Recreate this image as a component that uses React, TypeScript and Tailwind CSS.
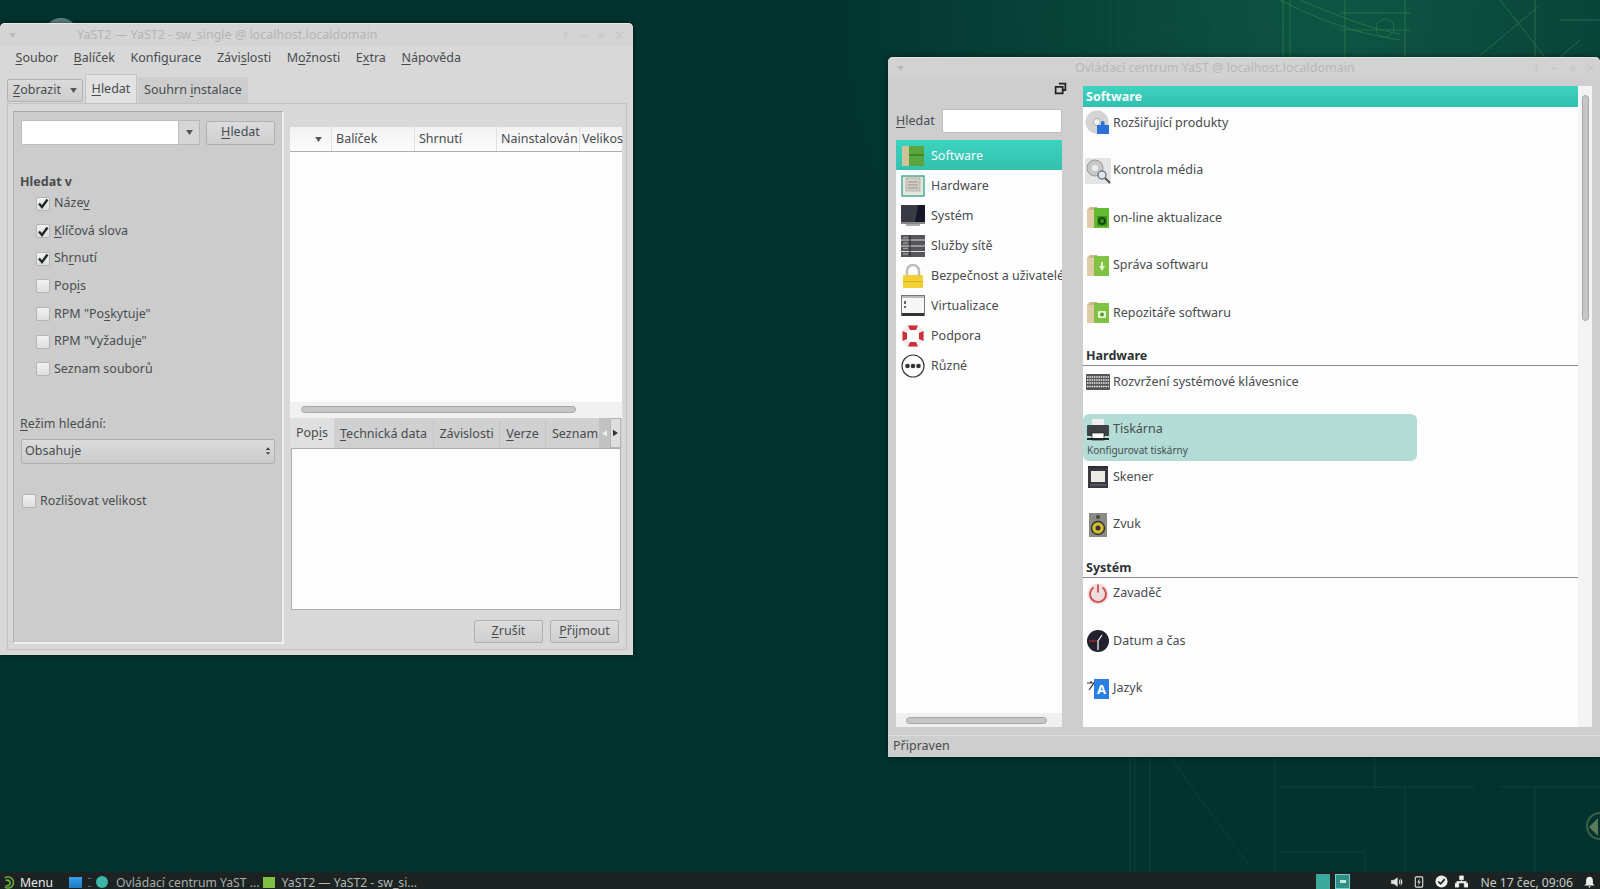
import React from "react";

const U = ({ c }: { c: string }) => <span className="underline underline-offset-2">{c}</span>;

const CheckBox = ({ on }: { on?: boolean }) => (
  <span className="flex h-[14px] w-[14px] shrink-0 items-center justify-center rounded-[2px] border border-[#b4b4b4] bg-gradient-to-b from-[#f2f2f2] to-[#dedede]">
    {on && (
      <svg viewBox="0 0 12 12" className="h-[13px] w-[13px]">
        <path d="M2 6 L5 9.500 L10.500 2" fill="none" stroke="#23282b" strokeWidth="2.400" />
      </svg>
    )}
  </span>
);

const Check = ({ on, label }: { on?: boolean; label: React.ReactNode }) => (
  <div className="flex h-[27.55px] items-center gap-[4px]">
    <CheckBox on={on} />
    <span>{label}</span>
  </div>
);

const Arrow = ({ cls }: { cls?: string }) => (
  <svg viewBox="0 0 8 6" className={"h-[5px] w-[7px] " + (cls ?? "")}>
    <path d="M0 0H8L4 6Z" fill="#555" />
  </svg>
);

const WinButtons = () => (
  <div className="flex items-center gap-[9px]">
    <svg viewBox="0 0 10 10" className="h-[9px] w-[9px]"><path d="M5 1v8M3 3l2-2 2 2" stroke="#c6c6c6" strokeWidth="1.400" fill="none" /></svg>
    <svg viewBox="0 0 10 10" className="h-[9px] w-[9px]"><path d="M1 5h8" stroke="#c6c6c6" strokeWidth="1.400" /></svg>
    <svg viewBox="0 0 10 10" className="h-[9px] w-[9px]"><path d="M1 5h8M5 1v8" stroke="#c6c6c6" strokeWidth="1.400" /></svg>
    <svg viewBox="0 0 10 10" className="h-[9px] w-[9px]"><path d="M1 1l8 8M9 1l-8 8" stroke="#c6c6c6" strokeWidth="1.400" /></svg>
  </div>
);

const Btn = ({ children, cls }: { children: React.ReactNode; cls: string }) => (
  <div className={"flex items-center justify-center rounded-[2px] border border-[#b0b0b0] bg-gradient-to-b from-[#dcdcdc] to-[#cfcfcf] " + cls}>{children}</div>
);

const Crate = ({ children, body }: { children: React.ReactNode; body: string }) => (
  <svg viewBox="0 0 24 24" className="h-[24px] w-[24px]">
    <rect x="1" y="4" width="8" height="18" fill="#e0cda8" />
    <path d="M1 4 L4 1 H12 L9 4Z" fill="#cdb78f" />
    <rect x="8" y="2" width="15" height="20" fill={body} />
    {children}
  </svg>
);

const Ic = {
  ext: (
    <svg viewBox="0 0 26 26" className="h-[26px] w-[26px]">
      <circle cx="12" cy="12" r="11.500" fill="#d4d4d4" />
      <circle cx="12" cy="12" r="3.500" fill="#f4f4f4" stroke="#aaa" />
      <path d="M12 15h4v-3a2 2 0 0 1 3.500 0v3h4.500v9H12z" fill="#2a72d8" />
    </svg>
  ),
  media: (
    <svg viewBox="0 0 26 26" className="h-[26px] w-[26px]">
      <rect width="26" height="26" fill="#e4e4e4" />
      <circle cx="10" cy="10" r="8" fill="#c8c8c8" stroke="#9a9a9a" />
      <circle cx="10" cy="10" r="3" fill="#eee" />
      <circle cx="17" cy="17" r="4" fill="#dfe6ee" stroke="#6f7a88" strokeWidth="1.400" />
      <path d="M20 20l5 5" stroke="#555" strokeWidth="2" />
    </svg>
  ),
  update: (
    <Crate body="#62bb33">
      <rect x="11" y="10" width="10" height="10" fill="#3b8f20" />
      <circle cx="16" cy="15" r="3" fill="none" stroke="#123d0a" strokeWidth="1.600" />
    </Crate>
  ),
  sw: (
    <Crate body="#80c243">
      <path d="M13 12h6l-3 5z M15 8h2v5h-2z" fill="#e6f5d4" />
    </Crate>
  ),
  repo: (
    <Crate body="#80c243">
      <rect x="12" y="10" width="8" height="7" rx="1" fill="#e6f5d4" />
      <circle cx="16" cy="13.500" r="2" fill="#5e9c2c" />
    </Crate>
  ),
  kbd: (
    <svg viewBox="0 0 24 16" className="h-[16px] w-[24px]">
      <rect width="24" height="16" rx="1" fill="#555" />
      <path d="M1 3h22M1 6h22M1 9h22M1 12.500h22" stroke="#eee" strokeWidth="1.500" strokeDasharray="1.500 .8" />
    </svg>
  ),
  printer: (
    <svg viewBox="0 0 22 22" className="h-[22px] w-[22px]">
      <rect x="5" y="0" width="12" height="8" fill="#efefef" />
      <rect x="0" y="6" width="22" height="11" rx="1" fill="#3d4246" />
      <rect x="5" y="14" width="12" height="7" fill="#fff" stroke="#222" strokeWidth=".7" />
      <rect x="0" y="19" width="22" height="2" fill="#222" />
    </svg>
  ),
  scanner: (
    <svg viewBox="0 0 20 22" className="h-[22px] w-[20px]">
      <rect width="20" height="3" fill="#2f2d33" />
      <rect x="0" y="2" width="20" height="20" fill="#3a3840" />
      <rect x="3" y="5" width="14" height="11" fill="#eeeae6" />
      <rect x="2" y="18" width="16" height="2" fill="#55535c" />
    </svg>
  ),
  sound: (
    <svg viewBox="0 0 18 24" className="h-[24px] w-[18px]">
      <rect width="18" height="24" fill="#8b8b85" />
      <circle cx="9" cy="4" r="2" fill="#444" />
      <circle cx="9" cy="15" r="6.500" fill="#d4c02f" stroke="#2f2f2f" strokeWidth="1.400" />
      <circle cx="9" cy="15" r="2.500" fill="#333" />
    </svg>
  ),
  boot: (
    <svg viewBox="0 0 22 22" className="h-[22px] w-[22px]">
      <circle cx="11" cy="11" r="10.500" fill="#f0dcdc" />
      <path d="M6.500 4.500a8 8 0 1 0 9 0" fill="none" stroke="#cf4b4b" strokeWidth="1.800" />
      <path d="M11 1.500v8" stroke="#cf4b4b" strokeWidth="1.800" />
    </svg>
  ),
  clock: (
    <svg viewBox="0 0 22 22" className="h-[22px] w-[22px]">
      <circle cx="11" cy="11" r="11" fill="#22222e" />
      <path d="M2 11h9" stroke="#c33" strokeWidth="1" />
      <path d="M11 11v9M11 11l4-6" stroke="#eee" strokeWidth="1.300" />
    </svg>
  ),
  lang: (
    <svg viewBox="0 0 24 22" className="h-[22px] w-[24px]">
      <path d="M1 5h7l-5 7M5 3v2" fill="none" stroke="#333" strokeWidth="1.200" />
      <rect x="8" y="1" width="15" height="20" fill="#2a7fe0" />
      <text x="15.500" y="16" fontSize="13" fontWeight="700" fontFamily="Noto Sans" fill="#fff" textAnchor="middle">A</text>
    </svg>
  ),
  catSoftware: (
    <svg viewBox="0 0 24 22" className="h-[22px] w-[24px]">
      <rect x="1" y="1" width="8" height="20" fill="#cfc39c" />
      <rect x="8" y="1" width="15" height="20" fill="#5aa53c" />
      <rect x="8" y="9" width="15" height="2" fill="#3d8a2a" />
    </svg>
  ),
  catHardware: (
    <svg viewBox="0 0 24 22" className="h-[22px] w-[24px]">
      <rect x="1" y="1" width="22" height="20" fill="#e6e6e0" stroke="#3fa98a" strokeWidth="1.400" />
      <rect x="5" y="3" width="14" height="13" fill="#d3cec6" stroke="#888" strokeWidth=".5" />
      <path d="M7 7h10M7 10h10M7 13h10" stroke="#9b9488" strokeWidth="1" />
    </svg>
  ),
  catSystem: (
    <svg viewBox="0 0 24 22" className="h-[22px] w-[24px]">
      <rect x="0" y="0" width="24" height="17" fill="#3a3a44" />
      <path d="M17 0h7v17h-10z" fill="#16162a" />
      <rect x="0" y="17" width="24" height="2" fill="#888" />
      <rect x="5" y="19" width="14" height="2" fill="#aaa" />
    </svg>
  ),
  catNet: (
    <svg viewBox="0 0 24 22" className="h-[22px] w-[24px]">
      <rect width="24" height="22" fill="#55555a" />
      <path d="M0 5h24M0 11h24M0 16.500h24" stroke="#ddd" strokeWidth="1" />
      <path d="M9 0v22" stroke="#2f2f33" strokeWidth="1" />
      <path d="M2 2.500h5M2 8h5M2 13.500h5M2 19h5" stroke="#999" strokeWidth="1.500" />
    </svg>
  ),
  catLock: (
    <svg viewBox="0 0 22 24" className="h-[24px] w-[22px]">
      <path d="M5 12V7a6 6 0 0 1 12 0v5" fill="none" stroke="#bdbdbd" strokeWidth="2.500" />
      <rect x="1" y="11" width="20" height="13" rx="1" fill="#f2cf32" />
      <rect x="1" y="17" width="20" height="1" fill="#d8b21f" />
    </svg>
  ),
  catVirt: (
    <svg viewBox="0 0 24 22" className="h-[22px] w-[24px]">
      <rect x=".5" y=".5" width="23" height="20" fill="#f7f7f7" stroke="#777" />
      <rect x="1" y="18" width="22" height="3" fill="#333" />
      <rect x="1" y="1" width="22" height="2" fill="#bbb" />
      <path d="M4 6v3M4 11v2" stroke="#333" strokeWidth="1.500" />
    </svg>
  ),
  catHelp: (
    <svg viewBox="0 0 24 24" className="h-[24px] w-[24px]">
      <circle cx="12" cy="12" r="9" fill="none" stroke="#f1eded" strokeWidth="5" />
      <path d="M7 1.500h10l-2 4.500H9z M7 22.500h10l-2-4.500H9z M1.500 7v10l4.500-2V9z M22.500 7v10l-4.500-2V9z" fill="#cf2d3a" />
    </svg>
  ),
  catMisc: (
    <svg viewBox="0 0 24 24" className="h-[24px] w-[24px]">
      <circle cx="12" cy="12" r="11" fill="#fff" stroke="#3c3c3c" strokeWidth="1.200" />
      <circle cx="6.500" cy="12" r="2.300" fill="#333" />
      <circle cx="12" cy="12" r="2.300" fill="#333" />
      <circle cx="17.500" cy="12" r="2.300" fill="#333" />
    </svg>
  ),
};

const SearchWindow = () => (
  <div className="absolute left-0 top-[23px] flex h-[632px] w-[633px] flex-col rounded-t-[5px] bg-[#d8d8d8] shadow-[0_0_6px_rgba(0,0,0,0.5)]">
    <div className="relative flex h-[23px] shrink-0 items-center justify-between rounded-t-[5px] border-t border-[#e8e8e8] bg-[#d4d4d4] pl-[9px] pr-[9px]">
      <Arrow cls="opacity-20" />
      <span className="absolute left-[77px] text-[#b4b4b4]">YaST2 — YaST2 - sw_single @ localhost.localdomain</span>
      <WinButtons />
    </div>
    <div className="flex h-[24px] shrink-0 items-center gap-[15.5px] pl-[15.5px]">
      <span><U c="S" />oubor</span>
      <span><U c="B" />alíček</span>
      <span>Konfi<U c="g" />urace</span>
      <span>Závi<U c="s" />losti</span>
      <span>M<U c="o" />žnosti</span>
      <span>E<U c="x" />tra</span>
      <span><U c="N" />ápověda</span>
    </div>
    <div className="mt-[4px] flex h-[29px] shrink-0 items-end pl-[7px]">
      <div className="mb-[1px] flex h-[23px] w-[76px] items-center justify-between rounded-[2px] border border-[#b2b2b2] bg-gradient-to-b from-[#dadada] to-[#cecece] pl-[5px] pr-[5px]">
        <span><U c="Z" />obrazit</span>
        <Arrow />
      </div>
      <div className="ml-[2px] flex h-[29px] w-[52px] items-center justify-center rounded-t-[2px] border border-b-0 border-[#c4c4c4] bg-[#e2e2e2]"><span><U c="H" />ledat</span></div>
      <div className="ml-[1px] flex h-[26px] w-[110px] items-center justify-center rounded-t-[2px] bg-[#cdcdcd]"><span>Souhrn <U c="i" />nstalace</span></div>
    </div>
    <div className="ml-[7px] mr-[6px] flex min-h-0 flex-1 gap-[6px] border border-[#c2c2c2] bg-[#d8d8d8] pb-[5px] pl-[5px] pr-[4px] pt-[7px]">
      <div className="flex w-[271px] shrink-0 flex-col border-b-2 border-l border-r-2 border-t border-b-[#efefef] border-l-[#aeaeae] border-r-[#efefef] border-t-[#a8a8a8] bg-[#cccccc] pl-[6px] pr-[6px] pt-[8px]">
        <div className="flex h-[25px] items-center pl-[1px]">
          <div className="h-[25px] w-[158px] rounded-l-[2px] border border-[#bdbdbd] bg-white" />
          <div className="flex h-[25px] w-[21px] items-center justify-center border border-l-0 border-[#b8b8b8] bg-[#d6d6d6]"><Arrow /></div>
          <Btn cls="ml-[6px] h-[24px] w-[69px]"><span><U c="H" />ledat</span></Btn>
        </div>
        <div className="mt-[28px] font-bold leading-[18px]">Hledat v</div>
        <div className="-mt-[1px] ml-[16px] flex flex-col">
          <Check on label={<>Náze<U c="v" /></>} />
          <Check on label={<><U c="K" />líčová slova</>} />
          <Check on label={<>Sh<U c="r" />nutí</>} />
          <Check label={<>Pop<U c="i" />s</>} />
          <Check label={<>RPM "Po<U c="s" />kytuje"</>} />
          <Check label={<>RPM "Vyžadu<U c="j" />e"</>} />
          <Check label="Seznam souborů" />
        </div>
        <div className="mt-[32px] leading-[18px]"><U c="R" />ežim hledání:</div>
        <div className="ml-[1px] mr-[1px] mt-[6px] flex h-[25px] items-center justify-between rounded-[2px] border border-[#b0b0b0] bg-gradient-to-b from-[#dcdcdc] to-[#cbcbcb] pl-[3px] pr-[3px]">
          <span>Obsahuje</span>
          <svg viewBox="0 0 8 12" className="h-[12px] w-[6px]"><path d="M4 1l3 3.500H1zM4 11l3-3.500H1z" fill="#444" /></svg>
        </div>
        <div className="ml-[2px] mt-[28px] flex items-center gap-[4px]"><CheckBox /><span>Rozlišovat velikost</span></div>
      </div>
      <div className="flex min-w-0 flex-1 flex-col pt-[16px]">
        <div className="flex h-[25px] shrink-0 border-b border-[#aeaeae] bg-gradient-to-b from-[#f2f2f2] to-[#fcfcfc]">
          <div className="flex w-[42px] items-center justify-end border-r border-[#e0e0e0] pr-[9px]"><Arrow /></div>
          <div className="flex w-[83px] items-center border-r border-[#e0e0e0] pl-[4px]">Balíček</div>
          <div className="flex w-[82px] items-center border-r border-[#e0e0e0] pl-[4px]">Shrnutí</div>
          <div className="flex w-[83px] items-center overflow-hidden whitespace-nowrap border-r border-[#e0e0e0] pl-[4px]">Nainstalován</div>
          <div className="flex w-[42px] items-center whitespace-nowrap pl-[2px]">Velikos</div>
        </div>
        <div className="min-h-0 flex-[0_0_250px] bg-[#fdfdfd]" />
        <div className="flex h-[16px] shrink-0 items-center bg-[#f1f1f1] pb-[1px] pl-[11px]">
          <div className="h-[7px] w-[275px] rounded-full border border-[#a6a6a6] bg-[#c6c6c6]" />
        </div>
        <div className="flex h-[30px] shrink-0 items-end overflow-hidden bg-[#d2d2d2]">
          <div className="flex h-[30px] w-[44px] shrink-0 items-center justify-center bg-[#e0e0e0]"><span>Pop<U c="i" />s</span></div>
          <div className="flex h-[28px] w-[100px] shrink-0 items-center justify-center border-r border-[#c4c4c4] bg-[#d0d0d0]"><span><U c="T" />echnická data</span></div>
          <div className="flex h-[28px] w-[66px] shrink-0 items-center justify-center border-r border-[#c4c4c4] bg-[#d0d0d0]">Závislosti</div>
          <div className="flex h-[28px] w-[46px] shrink-0 items-center justify-center border-r border-[#c4c4c4] bg-[#d0d0d0]"><span><U c="V" />erze</span></div>
          <div className="flex h-[28px] w-[53px] shrink-0 items-center whitespace-nowrap bg-[#d0d0d0] pl-[6px]">Seznam</div>
          <div className="flex h-[30px] w-[11px] shrink-0 items-center justify-center bg-[#c2c2c2]"><svg viewBox="0 0 6 8" className="h-[7px] w-[5px]"><path d="M6 0v8L0 4z" fill="#eee" /></svg></div>
          <div className="flex h-[30px] w-[11px] shrink-0 items-center justify-center border border-[#b4b4b4] bg-[#dedede]"><svg viewBox="0 0 6 8" className="h-[8px] w-[5px]"><path d="M0 0v8l6-4z" fill="#333" /></svg></div>
        </div>
        <div className="ml-[1px] mr-[1px] h-[162px] shrink-0 border border-[#aeaeae] bg-[#fdfdfd]" />
        <div className="mt-[10px] flex justify-end gap-[7px] pr-[3px]">
          <Btn cls="h-[23px] w-[69px]"><span><U c="Z" />rušit</span></Btn>
          <Btn cls="h-[23px] w-[69px]"><span><U c="P" />řijmout</span></Btn>
        </div>
      </div>
    </div>
    <div className="h-[5px] shrink-0" />
  </div>
);

const cats: [string, React.ReactNode][] = [
  ["Software", Ic.catSoftware],
  ["Hardware", Ic.catHardware],
  ["Systém", Ic.catSystem],
  ["Služby sítě", Ic.catNet],
  ["Bezpečnost a uživatelé", Ic.catLock],
  ["Virtualizace", Ic.catVirt],
  ["Podpora", Ic.catHelp],
  ["Různé", Ic.catMisc],
];

const Mod = ({ icon, label, sub }: { icon: React.ReactNode; label: string; sub?: string }) => (
  <div className={"h-[47.5px] w-[334px] pl-[2px] " + (sub ? "rounded-[6px] bg-[#b3dcd7]" : "")}>
    <div className="flex h-[32px] items-center">
      <span className="flex w-[26px] shrink-0 justify-center">{icon}</span>
      <span className="ml-[2px]">{label}</span>
    </div>
    {sub && <div className="-mt-[3px] ml-[2px] text-[10px] leading-[15px]">{sub}</div>}
  </div>
);

const Section = ({ label }: { label: string }) => (
  <div className="flex h-[21.5px] items-end border-b border-[#8a8a8a] pl-[3px] font-bold leading-[18px] text-[#2e3336]">{label}</div>
);

const ControlCenter = () => (
  <div className="absolute left-[888px] top-[57px] flex h-[700px] w-[712px] flex-col rounded-t-[5px] bg-[#cecece] shadow-[0_0_6px_rgba(0,0,0,0.5)]">
    <div className="relative flex h-[22px] shrink-0 items-center justify-between rounded-t-[5px] border-t border-[#e4e4e4] bg-[#d2d2d2] pl-[9px] pr-[5px]">
      <Arrow cls="opacity-20" />
      <span className="absolute left-[187px] text-[#b8b8b8]">Ovládací centrum YaST @ localhost.localdomain</span>
      <WinButtons />
    </div>
    <div className="flex min-h-0 flex-1 pl-[8px] pt-[7px]">
      <div className="flex w-[166px] shrink-0 flex-col">
        <div className="-mr-[5px] -mt-[4px] flex h-[16px] justify-end">
          <svg viewBox="0 0 12 12" className="h-[13px] w-[13px]"><path d="M4.500 1.500h6v6h-2M1.500 4.500h6.500v6h-6.500z" fill="none" stroke="#222" strokeWidth="1.600" /></svg>
        </div>
        <div className="mt-[11px] flex h-[24px] items-center justify-between">
          <span><U c="H" />ledat</span>
          <div className="h-[24px] w-[120px] rounded-[2px] border border-[#bdbdbd] bg-white" />
        </div>
        <div className="mt-[7px] flex h-[587px] flex-col overflow-hidden bg-[#fdfdfd]">
          <div className="min-h-0 flex-1">
            {cats.map(([label, icon], i) => (
              <div key={label} className={"flex h-[30px] items-center whitespace-nowrap pl-[5px] pt-[2px] " + (i === 0 ? "bg-gradient-to-b from-[#3bd4c0] to-[#34c0ae] text-[#f4fbfa]" : "")}>
                <span className="flex w-[24px] shrink-0 justify-center">{icon}</span>
                <span className="ml-[6px]">{label}</span>
              </div>
            ))}
          </div>
          <div className="flex h-[14px] shrink-0 items-center bg-[#f0f0f0] pl-[10px]">
            <div className="h-[7px] w-[141px] rounded-full border border-[#a6a6a6] bg-[#c6c6c6]" />
          </div>
        </div>
      </div>
      <div className="ml-[21px] flex h-[641px] min-w-0 flex-1 bg-[#fdfdfd]">
        <div className="min-w-0 flex-1 overflow-hidden">
          <div className="flex h-[21px] items-center bg-gradient-to-b from-[#3bd4c0] to-[#34bfae] pl-[3px] pt-[1px] font-bold text-[#f6fbfa]">Software</div>
          <Mod icon={Ic.ext} label="Rozšiřující produkty" />
          <Mod icon={Ic.media} label="Kontrola média" />
          <Mod icon={Ic.update} label="on-line aktualizace" />
          <Mod icon={Ic.sw} label="Správa softwaru" />
          <Mod icon={Ic.repo} label="Repozitáře softwaru" />
          <Section label="Hardware" />
          <Mod icon={Ic.kbd} label="Rozvržení systémové klávesnice" />
          <Mod icon={Ic.printer} label="Tiskárna" sub="Konfigurovat tiskárny" />
          <Mod icon={Ic.scanner} label="Skener" />
          <Mod icon={Ic.sound} label="Zvuk" />
          <Section label="Systém" />
          <Mod icon={Ic.boot} label="Zavaděč" />
          <Mod icon={Ic.clock} label="Datum a čas" />
          <Mod icon={Ic.lang} label="Jazyk" />
        </div>
        <div className="flex w-[14px] shrink-0 flex-col items-center bg-[#f4f4f4] pb-[14px] pt-[9px]">
          <div className="h-[226px] w-[7px] rounded-full border border-[#a6a6a6] bg-[#c6c6c6]" />
        </div>
      </div>
      <div className="w-[8px] shrink-0" />
    </div>
    <div className="mt-[8px] flex h-[22px] shrink-0 items-center border-t border-[#dcdcdc] pl-[5px]">Připraven</div>
  </div>
);

const TaskBar = () => (
  <div className="absolute bottom-0 left-0 right-0 flex h-[17px] items-end bg-[#1d2322] text-[12.2px] leading-[13px] text-[#c8cccb]">
    <svg viewBox="0 0 14 14" className="ml-[2px] h-[13px] w-[13px]">
      <path d="M3 2a6 6 0 1 1 0 10M4 5a3 3 0 1 1 0 5" fill="none" stroke="#6fb23c" strokeWidth="1.700" />
    </svg>
    <span className="ml-[5px] text-[#e6e8e8]">Menu</span>
    <span className="mb-[1px] ml-[16px] h-[11px] w-[13px] bg-gradient-to-b from-[#3aa0e6] to-[#1f79c9]" />
    <span className="mb-[2px] ml-[6px] h-[9px] w-[3px] border-y border-[#6a7070]" />
    <span className="mb-[1px] ml-[5px] h-[12px] w-[12px] rounded-full bg-[#3ab7a8]" />
    <span className="ml-[8px] text-[#a8acab]">Ovládací centrum YaST ...</span>
    <span className="mb-[1px] ml-[3px] h-[11px] w-[12px] bg-[#7fc043]" />
    <span className="ml-[7px] text-[#b2b6b5]">YaST2 — YaST2 - sw_si...</span>
    <span className="ml-auto flex items-end">
      <span className="h-[15px] w-[14px] bg-[#3aa99b]" />
      <span className="ml-[5px] flex h-[15px] w-[15px] items-center justify-center border border-[#7cc] bg-[#2f8f84]"><span className="h-[3px] w-[6px] bg-[#bfe8e2]" /></span>
      <svg viewBox="0 0 14 14" className="mb-[1px] ml-[40px] h-[12px] w-[13px]"><path d="M1 5h3l4-3v10l-4-3H1z M10 4c1.500 2 1.500 4 0 6M12 3c2 2.500 2 5.500 0 8" fill="#e4e4e4" stroke="#e4e4e4" strokeWidth=".6" /></svg>
      <svg viewBox="0 0 10 14" className="mb-[1px] ml-[11px] h-[13px] w-[10px]"><rect x="1" y="2" width="8" height="11" rx="1" fill="none" stroke="#ddd" strokeWidth="1.200" /><path d="M6 3.500L3 8h2l-1 3.500L7 7H5z" fill="#ddd" /></svg>
      <svg viewBox="0 0 14 14" className="mb-[1px] ml-[11px] h-[13px] w-[13px]"><circle cx="7" cy="7" r="6.500" fill="#eee" /><path d="M3.500 7l2.500 2.500 4.500-5" fill="none" stroke="#1d2322" strokeWidth="1.800" /></svg>
      <svg viewBox="0 0 14 14" className="mb-[1px] ml-[7px] h-[13px] w-[13px]"><path d="M5 1h4v4H5zM0 9h4v4H0zM10 9h4v4h-4zM7 5v2M2 9V7h10v2" fill="#eee" stroke="#eee" strokeWidth=".8" /></svg>
      <span className="ml-[12px] whitespace-nowrap text-[#c8cccb]">Ne 17 čec, 09:06</span>
      <svg viewBox="0 0 12 14" className="mb-[1px] ml-[11px] mr-[5px] h-[12px] w-[11px]"><path d="M6 1c3 0 4 2 4 5v3l2 2H0l2-2V6c0-3 1-5 4-5zM4.500 12h3l-1.500 2z" fill="#eee" /></svg>
    </span>
  </div>
);

const Wallpaper = () => (
  <svg className="absolute inset-0 h-full w-full" viewBox="0 0 1600 889" preserveAspectRatio="none">
    <defs>
      <radialGradient id="glow" cx="1340" cy="0" r="520" gradientUnits="userSpaceOnUse">
        <stop offset="0" stopColor="#0f5644" />
        <stop offset="1" stopColor="#0f5644" stopOpacity="0" />
      </radialGradient>
    </defs>
    <rect width="1600" height="889" fill="url(#glow)" />
    <g fill="none" stroke="#2f7a4c" strokeWidth="1" opacity="0.75">
      <path d="M1280 0c40 20 70 32 120 40M1300 0c40 16 60 26 100 34M1340 13h70M1340 30h70M1405 0v57M1345 0v57M1283 0v57M1290 0v57" />
      <path d="M1500 0l45 57M1535 0v57M1580 40l-20 17M1478 57l60-50M1560 20h40" />
      <circle cx="1385" cy="28" r="9" />
    </g>
    <g fill="none" stroke="#1a5a48" strokeWidth="1" opacity="0.4">
      <path d="M1110 0v57M1120 0v57M1220 0l-10 57M1130 40l60-20M1140 57l60 0M1170 25l30 32" />
      <path d="M1170 757l80 110M1275 757v116M1130 757v116M1135 757v116M1150 757v116M1280 787h100M1375 757v30h100M1500 787h100M1280 852h85v21M1405 787v86M1535 787v86" />
    </g>
    <circle cx="61" cy="35" r="17" fill="#5f8380" />
    <circle cx="1600" cy="826" r="13" fill="none" stroke="#3d5f45" strokeWidth="2" />
    <path d="M1598 818l-9 9 9 9z" fill="#5b7a5a" />
  </svg>
);

export default function App() {
  return (
    <div className="relative h-[889px] w-[1600px] overflow-hidden bg-[#02332f] text-[12.5px] text-[#484c4f]" style={{ fontFamily: '"Noto Sans", sans-serif' }}>
      <Wallpaper />
      <SearchWindow />
      <ControlCenter />
      <TaskBar />
    </div>
  );
}
